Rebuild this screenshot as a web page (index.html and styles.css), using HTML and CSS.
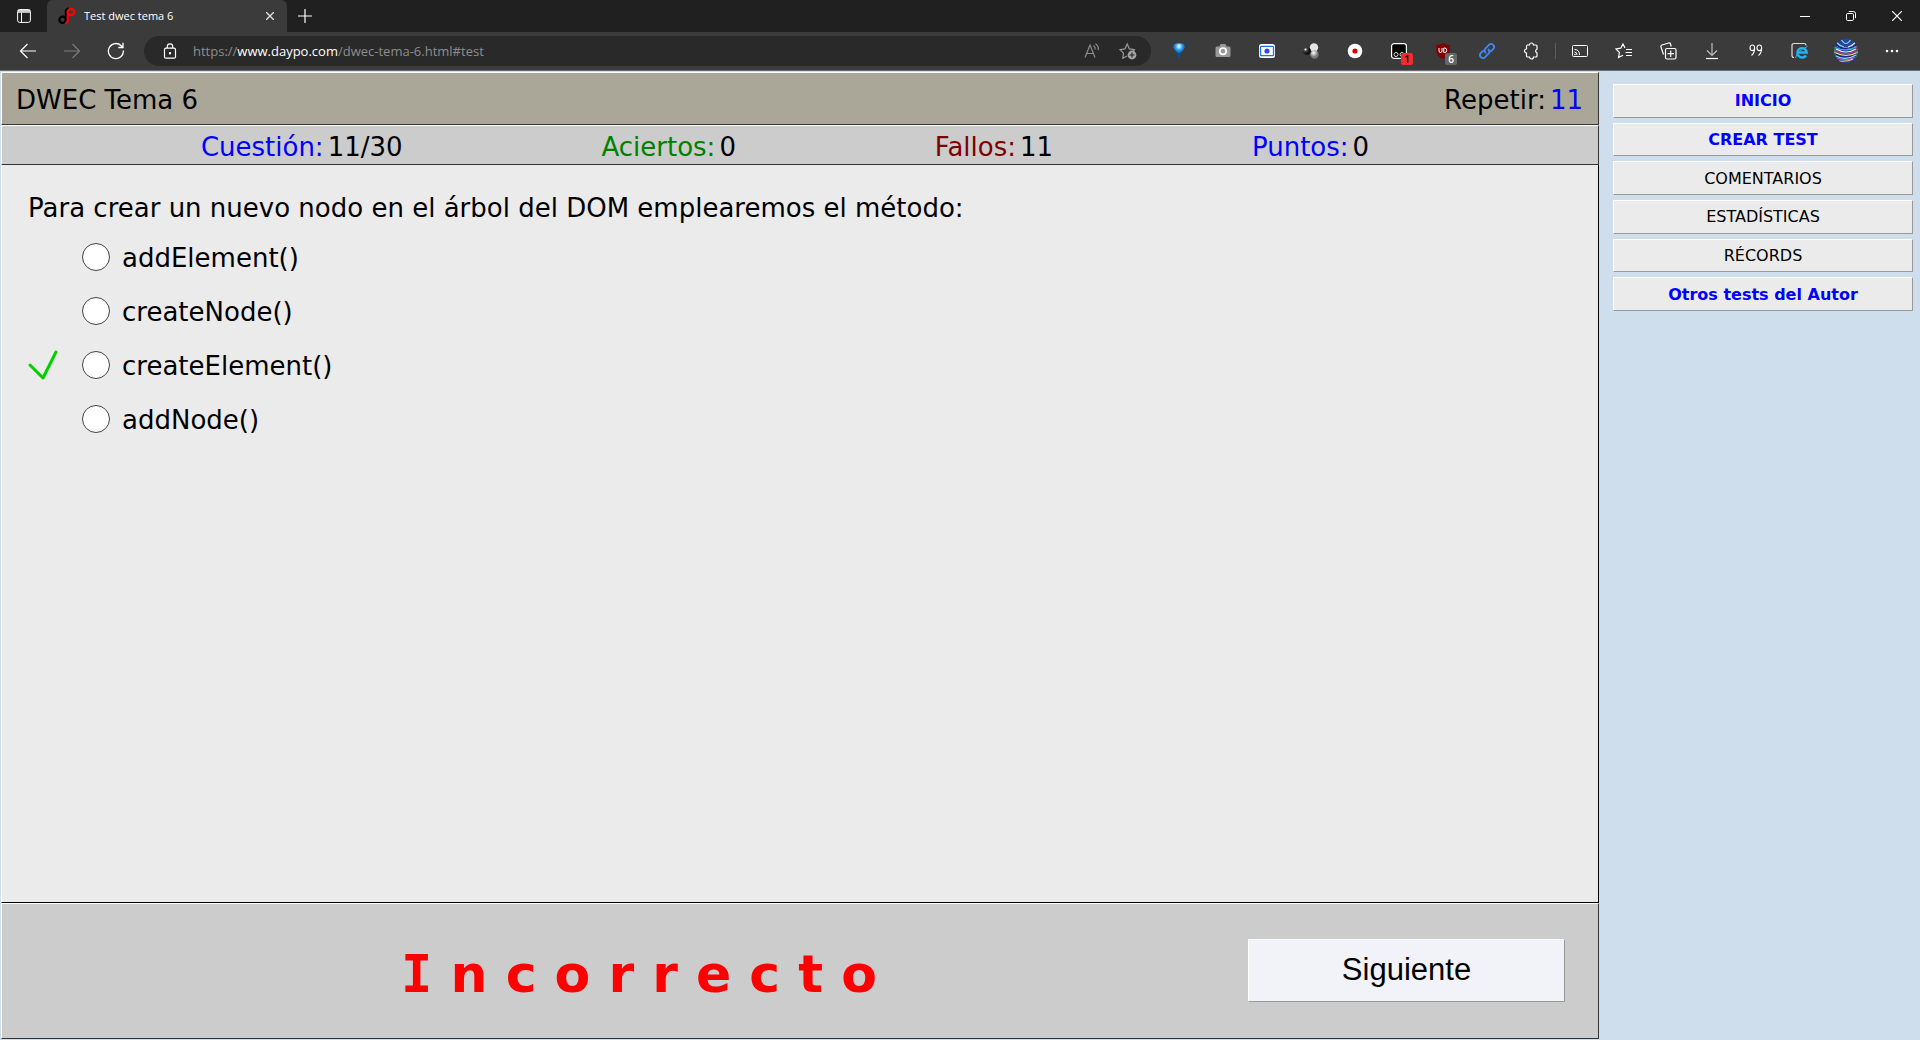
FILE: index.html
```html
<!DOCTYPE html>
<html lang="es">
<head>
<meta charset="utf-8">
<title>Test dwec tema 6</title>
<link rel="stylesheet" href="styles.css">
</head>
<body>
<div class="browser">
  <header class="tabbar">
    <button class="tab-actions" aria-label="Menú de acciones de pestañas">
      <svg width="14" height="14" viewBox="0 0 14 14" fill="none" stroke="#fff"><rect x=".6" y=".6" width="12.8" height="12.8" rx="2"/><path d="M1 2.2h12M1 1.2h12M1 3.2h12M4.5 3.5v10"/></svg>
    </button>
    <div class="tab">
      <svg width="18" height="18" viewBox="0 0 18 18" fill="none" stroke-width="2.2"><circle cx="4.6" cy="12.8" r="3.2" stroke="#000"/><path d="M7.8 13V4.5Q8 1.600 11 1.500" stroke="#000"/><circle cx="13" cy="5" r="3.200" stroke="#f00"/><path d="M9.800 4v9q0 3-2.600 3.600" stroke="#f00"/></svg>
      <span class="tab-title">Test dwec tema 6</span>
      <button class="tab-close" aria-label="Cerrar pestaña"><svg width="8" height="8" viewBox="0 0 8 8" stroke="#ddd" stroke-width="1.4"><path d="M0 0l8 8M8 0L0 8"/></svg></button>
    </div>
    <button class="new-tab" aria-label="Nueva pestaña"><svg width="14" height="14" viewBox="0 0 14 14" stroke="#fff" stroke-width="1.2"><path d="M7 0v14M0 7h14"/></svg></button>
    <div class="window-controls">
      <button aria-label="Minimizar"><svg width="10" height="10" viewBox="0 0 10 10" stroke="#fff"><path d="M0 5.5h10"/></svg></button>
      <button aria-label="Restaurar"><svg width="10" height="10" viewBox="0 0 10 10" fill="none" stroke="#fff"><rect x=".5" y="2.5" width="7" height="7" rx="1.2"/><path d="M2.8.5h4.700q2 0 2 2v4.700"/></svg></button>
      <button aria-label="Cerrar"><svg width="10" height="10" viewBox="0 0 10 10" stroke="#fff" stroke-width="1.2"><path d="M0 0l10 10M10 0L0 10"/></svg></button>
    </div>
  </header>
  <div class="toolbar">
    <nav class="nav-buttons">
      <button aria-label="Atrás"><svg width="18" height="16" viewBox="0 0 18 16" fill="none" stroke="#fff" stroke-width="1.200"><path d="M17 8H1.500M8.500 1L1.500 8l7 7"/></svg></button>
      <button aria-label="Adelante"><svg width="18" height="16" viewBox="0 0 18 16" fill="none" stroke="#7c7c7c" stroke-width="1.200"><path d="M1 8h15.500M9.500 1l7 7-7 7"/></svg></button>
      <button aria-label="Actualizar"><svg width="18" height="18" viewBox="0 0 18 18" fill="none" stroke="#fff" stroke-width="1.300"><path d="M16.400 8.500a7.500 7.500 0 1 1-2.200-4.800L16 5.500M16 .8v4.700h-4.700"/></svg></button>
    </nav>
    <div class="address">
      <svg width="14" height="16" viewBox="0 0 14 16" fill="none" stroke="#fff" stroke-width="1.200"><rect x="1.500" y="5.200" width="11" height="10" rx="1.500"/><path d="M4.300 5V3.500a2.700 2.700 0 0 1 5.400 0V5"/><circle cx="7" cy="10.200" r=".6" fill="#fff"/></svg>
      <a class="url" href="#test">https://<span class="host">www.daypo.com</span>/dwec-tema-6.html#test</a>
      <button class="read" aria-label="Leer en voz alta"><svg width="16" height="16" viewBox="0 0 16 16" fill="none" stroke="#8d8d8d" stroke-width="1.200"><path d="M1 14.500L6 2l5 12.500M2.700 10.500h6.600M9.500 2.500q2 1.500 1.700 4M11.500.8q3.500 2.500 2.800 6.400"/></svg></button>
      <button aria-label="Agregar a favoritos"><svg width="18" height="18" viewBox="0 0 18 18" fill="none" stroke="#9a9a9a" stroke-width="1.200"><path d="M8 14L3.800 16.200l.7-5L1 7.600l4.900-.7L8.200 2l2.200 4.900 5 .7-1.200 1.400"/><circle cx="13" cy="13" r="4.400" fill="#a5a5a5" stroke="none"/><path d="M13 10.500v5M10.500 13h5" stroke="#292929"/></svg></button>
    </div>
    <div class="extensions">
      <button aria-label="Extensión de búsqueda"><svg width="14" height="16" viewBox="0 0 14 16"><defs><radialGradient id="gem" cx=".5" cy=".2"><stop offset="0" stop-color="#fff"/><stop offset=".5" stop-color="#2ba5ee"/><stop offset="1" stop-color="#064f9c"/></radialGradient></defs><path d="M2.500 1Q7-.3 11.500 1L13.500 4 8.500 10.500 7.700 15H6.300L5.500 10.500.5 4z" fill="url(#gem)"/></svg></button>
      <button aria-label="Captura de pantalla"><svg width="16" height="16" viewBox="0 0 16 16"><path d="M2 3.500h2.500L5.500 1h5l1 2.500H14q1.500 0 1.500 1.500v7.500Q15.500 14 14 14H2Q.500 14 .500 12.500V5Q.500 3.500 2 3.500z" fill="#999"/><circle cx="8" cy="8.200" r="3.200" fill="#999" stroke="#fff" stroke-width="1.700"/></svg></button>
      <button aria-label="Grabadora"><svg width="16" height="14" viewBox="0 0 16 14"><rect width="16" height="14" rx="2.500" fill="#fff"/><rect x="1.500" y="2.300" width="13" height="9.400" rx="1" fill="#fff" stroke="#1673ed" stroke-width="1.300"/><circle cx="8" cy="7" r="2.600" fill="#3c48d0"/></svg></button>
      <button aria-label="Esferas"><svg width="16" height="16" viewBox="0 0 16 16"><defs><radialGradient id="black-ball" cx=".3" cy=".3"><stop offset="0" stop-color="#fff"/><stop offset=".4" stop-color="#555"/><stop offset="1" stop-color="#111"/></radialGradient><radialGradient id="gray-ball" cx=".4" cy=".3"><stop offset="0" stop-color="#fff"/><stop offset="1" stop-color="#777"/></radialGradient></defs><circle cx="11" cy="4.500" r="4.200" fill="#e5e5e5"/><circle cx="4" cy="8" r="3.800" fill="url(#black-ball)"/><circle cx="11.500" cy="11.500" r="4.200" fill="url(#gray-ball)"/></svg></button>
      <button aria-label="Grabar"><svg width="16" height="16" viewBox="0 0 16 16"><circle cx="8" cy="8" r="7.300" fill="#fff"/><circle cx="8" cy="8" r="2.600" fill="#d00"/></svg></button>
      <button class="badged" aria-label="Gestor de scripts"><svg width="16" height="16" viewBox="0 0 16 16"><rect x=".6" y=".6" width="14.800" height="14.800" rx="2.500" fill="#000" stroke="#fff" stroke-width="1.200"/><circle cx="5" cy="11.500" r="2" fill="none" stroke="#ddd"/><circle cx="11" cy="11.500" r="2" fill="none" stroke="#ddd"/></svg><span class="badge red">1</span></button>
      <button class="badged" aria-label="uBlock"><svg width="16" height="16" viewBox="0 0 16 16"><path d="M8 0q3 2 6.800 2v6q0 5-6.800 8-6.800-3-6.800-8V2Q5 2 8 0z" fill="#800000"/><path d="M4 5v3q0 1.500 1.500 1.500T7 8V5M8.800 5v4.500h1q2 0 2-2.200t-2-2.300z" fill="none" stroke="#fff"/></svg><span class="badge gray">6</span></button>
      <button aria-label="Enlaces"><svg width="18" height="18" viewBox="0 0 18 18" fill="none" stroke="#4285f4" stroke-width="1.900" stroke-linecap="round"><path d="M7.500 10.500a3 3 0 0 1 0-4.200l3.700-3.700a3 3 0 0 1 4.200 4.200L13 9.200M10.500 7.500a3 3 0 0 1 0 4.200l-3.700 3.700a3 3 0 0 1-4.200-4.200L5 8.800"/></svg></button>
      <button aria-label="Extensiones"><svg width="16" height="18" viewBox="0 0 16 18" fill="none" stroke="#fff" stroke-width="1.200"><path d="M4.500 3H6.500a2 2 0 0 1 4 0H13q1 0 1 1v3.200a2 2 0 0 0 0 3.800V14q0 1-1 1h-2.500a2 2 0 0 1-4 0H4.500q-1 0-1-1v-3a2 2 0 0 1 0-4V4q0-1 1-1z"/></svg></button>
    </div>
    <div class="tools">
      <button aria-label="Transmitir"><svg width="18" height="14" viewBox="0 0 18 14" fill="none" stroke="#fff"><rect x="1.500" y="1.500" width="15" height="11" rx="1"/><path d="M3.500 5.500q5 0 5 5.500M3.500 8q2.500 0 2.500 3"/><circle cx="4" cy="10.500" r=".4"/></svg></button>
      <button aria-label="Favoritos"><svg width="18" height="16" viewBox="0 0 18 16" fill="none" stroke="#fff" stroke-width="1.200"><path d="M10 5L8 1 5.700 5.200 1 6l3.400 3.500-.8 5L8 12.200M11 6.500h6M10.500 9.500H17M11 12.500h6"/></svg></button>
      <button aria-label="Colecciones"><svg width="18" height="18" viewBox="0 0 18 18" fill="none" stroke="#fff" stroke-width="1.200"><rect x="6.500" y="6.500" width="10.500" height="10.500" rx="1.500"/><path d="M11.700 8.500v6.500M8.500 11.700H15M4.500 12.500L2 5Q1.500 3.500 3 3l6.500-2q1.500-.4 2 1l.7 2.500"/></svg></button>
      <button aria-label="Descargas"><svg width="14" height="18" viewBox="0 0 14 18" fill="none" stroke="#bbb" stroke-width="1.200"><path d="M7 1v12.500M2 8.500l5 5 5-5"/><path d="M1 16.500h12" stroke="#fff"/></svg></button>
      <button aria-label="Citar"><svg width="14" height="16" viewBox="0 0 14 16" fill="none" stroke="#fff" stroke-width="1.100"><ellipse cx="3.300" cy="4.800" rx="2.300" ry="2.800"/><path d="M5.600 4.800Q6 9.500 2.500 12.500"/><ellipse cx="10.300" cy="4.800" rx="2.300" ry="2.800"/><path d="M12.600 4.800Q13 9.500 9.500 12.500"/></svg></button>
      <button aria-label="Modo Internet Explorer"><svg width="18" height="18" viewBox="0 0 18 18" fill="none"><path d="M3 15.500q-2 0-2-2V3.500q0-2 2-2h10q2 0 2 2" stroke="#ddd" stroke-width="1.200"/><path d="M15 13.500a4.700 4.700 0 1 1 .8-3H7" stroke="#1eb4f0" stroke-width="2.400"/><path d="M4.500 16Q6 9 16.500 4.500" stroke="#1eb4f0"/></svg></button>
      <button class="profile" aria-label="Perfil"><svg width="24" height="24" viewBox="0 0 24 24"><defs><clipPath id="face"><circle cx="12" cy="12" r="12"/></clipPath></defs><g clip-path="url(#face)" fill="none" stroke-width="1.200"><rect width="24" height="24" fill="#24459d"/><path d="M7 0q5 9 10 0M2 3q4 4 8 5" stroke="#8bd9ee"/><path d="M22 3q-4 4-8 5M3 7q9 4 18 0" stroke="#dfe9ee"/><path d="M1 5q11 9 22 0" stroke="#10206f"/><path d="M0 8q12 6 24-1" stroke="#39b3da"/><path d="M2 10q10 6 20 0" stroke="#f4f0d8"/><path d="M0 11q12 8 24-1" stroke="#b83a80"/><path d="M0 13q12 7 24 0" stroke="#f0de6c"/><path d="M1 15q11 6 22 0" stroke="#181f88"/><path d="M2 17q10 5 20-1" stroke="#8fe0f0"/><path d="M3 19q9 4 18-1" stroke="#d554a8"/><path d="M5 22q8 1 14-2" stroke="#e4d45c"/><path d="M1 8v10" stroke="#2aa245"/><path d="M23 7v5" stroke="#c43338"/><path d="M23 12v6" stroke="#35a94c"/></g></svg></button>
      <button aria-label="Más"><svg width="14" height="4" viewBox="0 0 14 4" fill="#fff"><circle cx="2" cy="2" r="1.300"/><circle cx="7" cy="2" r="1.300"/><circle cx="12" cy="2" r="1.300"/></svg></button>
    </div>
  </div>
  <div class="page">
    <main class="test">
      <div class="title-row"><h1>DWEC Tema 6</h1><p>Repetir:<a class="repeat" href="#repetir">11</a></p></div>
      <div class="stats">
        <span><span class="blue">Cuestión:</span>11/30</span>
        <span><span class="green">Aciertos:</span>0</span>
        <span><span class="maroon">Fallos:</span>11</span>
        <span><span class="blue">Puntos:</span>0</span>
      </div>
      <form class="question">
        <p>Para crear un nuevo nodo en el árbol del DOM emplearemos el método:</p>
        <ul class="answers">
          <li><span class="mark"></span><input type="radio" name="respuesta" id="r1"><label for="r1">addElement()</label></li>
          <li><span class="mark"></span><input type="radio" name="respuesta" id="r2"><label for="r2">createNode()</label></li>
          <li><span class="mark"><svg width="30" height="32" viewBox="0 0 30 32" fill="none" stroke="#00d000" stroke-width="3" stroke-linecap="round" stroke-linejoin="round"><path d="M2 16l13 13L28 3"/></svg></span><input type="radio" name="respuesta" id="r3"><label for="r3">createElement()</label></li>
          <li><span class="mark"></span><input type="radio" name="respuesta" id="r4"><label for="r4">addNode()</label></li>
        </ul>
      </form>
      <div class="result"><strong><span class="serif-i">I</span> n c o r r e c t o</strong><button class="next">Siguiente</button></div>
    </main>
    <nav class="side">
      <a class="strong" href="#inicio">INICIO</a>
      <a class="strong" href="#crear">CREAR TEST</a>
      <a href="#comentarios">COMENTARIOS</a>
      <a href="#estadisticas">ESTADÍSTICAS</a>
      <a href="#records">RÉCORDS</a>
      <a class="strong" href="#autor">Otros tests del Autor</a>
    </nav>
  </div>
</div>
</body>
</html>
```

FILE: styles.css
```css
* { box-sizing: border-box; }
body { margin: 0; font-family: Verdana, "DejaVu Sans", sans-serif; color: #000; }
h1, p, ul { margin: 0; padding: 0; }
button { padding: 0; border: 0; background: none; font: inherit; }
svg { display: block; flex: none; }

.browser { display: flex; flex-direction: column; min-height: 100vh; }

/* Browser chrome */
.tabbar, .toolbar { display: flex; align-items: center; font-family: "Segoe UI", "Open Sans", sans-serif; }
.tabbar { height: 32px; background: #202020; }
.tabbar button, .toolbar button { display: flex; align-items: center; justify-content: center; }
.tab-actions { width: 47px; height: 32px; }
.tab { display: flex; align-items: center; width: 240px; height: 32px; padding: 0 12px 0 11px; gap: 8px; background: #3b3b3b; border-radius: 6px 6px 0 0; }
.tab-title { flex: 1; font-size: 11px; line-height: 16px; color: #fff; }
.tab-close { width: 10px; height: 16px; }
.new-tab { width: 35px; height: 32px; }
.window-controls { display: flex; margin-left: auto; }
.window-controls button { width: 46px; height: 32px; }

.toolbar { height: 39px; background: #3b3b3b; border-bottom: 1px solid #6c6c6c; }
.nav-buttons { display: flex; padding: 0 6px; }
.nav-buttons button, .extensions button, .tools button { width: 44px; height: 30px; }
.address { display: flex; flex: 1; align-items: center; height: 30px; padding: 0 14px 0 19px; gap: 16px; border-radius: 15px; background: #292929; }
.url { flex: 1; font-size: 13px; line-height: 20px; color: #8d8d8d; text-decoration: none; }
.host { color: #fff; }
.read { margin-right: 3px; }
.extensions { display: flex; align-items: center; height: 16px; padding: 0 2px 0 6px; border-right: 1px solid #5c5c5c; }
.tools { display: flex; padding: 0 6px 0 2px; }
.tools .profile { width: 48px; }
.badged { position: relative; }
.badge { position: absolute; right: 8px; bottom: 1px; width: 12px; height: 12px; border-radius: 2px; font-size: 10px; font-weight: 600; line-height: 12px; text-align: center; }
.red { background: #ee2e2e; color: #000; }
.gray { background: #666; color: #fff; }

/* Test page */
.page { display: flex; flex: 1; padding: 1px 7px 1px 1px; gap: 14px; background: #cfdeed; }
.test { display: flex; flex: 1; flex-direction: column; font-size: 26px; line-height: 32px; }
.title-row, .stats, .result { border: 1px solid #333; border-top-color: #fff; border-left-color: #fff; }
.title-row { display: flex; align-items: center; justify-content: space-between; height: 53px; padding: 2px 15px 0 14px; background: #aba798; }
h1 { font-size: 26px; font-weight: 400; }
.repeat { margin-left: 4px; color: #00f; text-decoration: none; }
.stats { display: flex; align-items: center; justify-content: space-evenly; height: 40px; padding: 4px 30px 0 0; background: #ccc; }
.stats > span { display: flex; gap: 4px; }
.blue { color: #00f; }
.green { color: #008000; }
.maroon { color: #800000; }
.question { flex: 1; padding: 27px 26px 0; border: solid #000; border-width: 0 1px 1px; border-left-color: #fff; background: #ebebeb; }
.answers { display: flex; flex-direction: column; gap: 10px; margin-top: 11px; list-style: none; }
.answers li { display: flex; align-items: center; height: 44px; }
.answers label { padding-top: 2px; }
.mark { width: 54px; }
.answers input { appearance: none; width: 28px; height: 28px; margin: 0 12px 0 0; border: 1px solid #444; border-radius: 50%; background: #fff; }
.result { display: flex; align-items: center; height: 136px; padding: 0 33px 2px 0; background: #ccc; }
.result strong { flex: 1; padding: 8px 0 0 28px; font-size: 52px; line-height: 60px; text-align: center; color: #f00; }
.serif-i { font-family: "DejaVu Sans Mono", monospace; }
.next { width: 317px; height: 63px; border: 1px solid #999; border-top-color: #fff; border-left-color: #fff; background: #f2f3f8; font-family: Arial, "Liberation Sans", sans-serif; font-size: 31px; }
.side { display: grid; grid-template-rows: repeat(6, 1fr); gap: 5px; width: 300px; height: 227px; margin-top: 12px; }
.side a { display: flex; align-items: center; justify-content: center; border: 1px solid #999; border-top-color: #fff; border-left-color: #fff; background: #ebebeb; font-size: 16px; color: #000; text-decoration: none; }
.side .strong { font-weight: 700; color: #00f; }
```
